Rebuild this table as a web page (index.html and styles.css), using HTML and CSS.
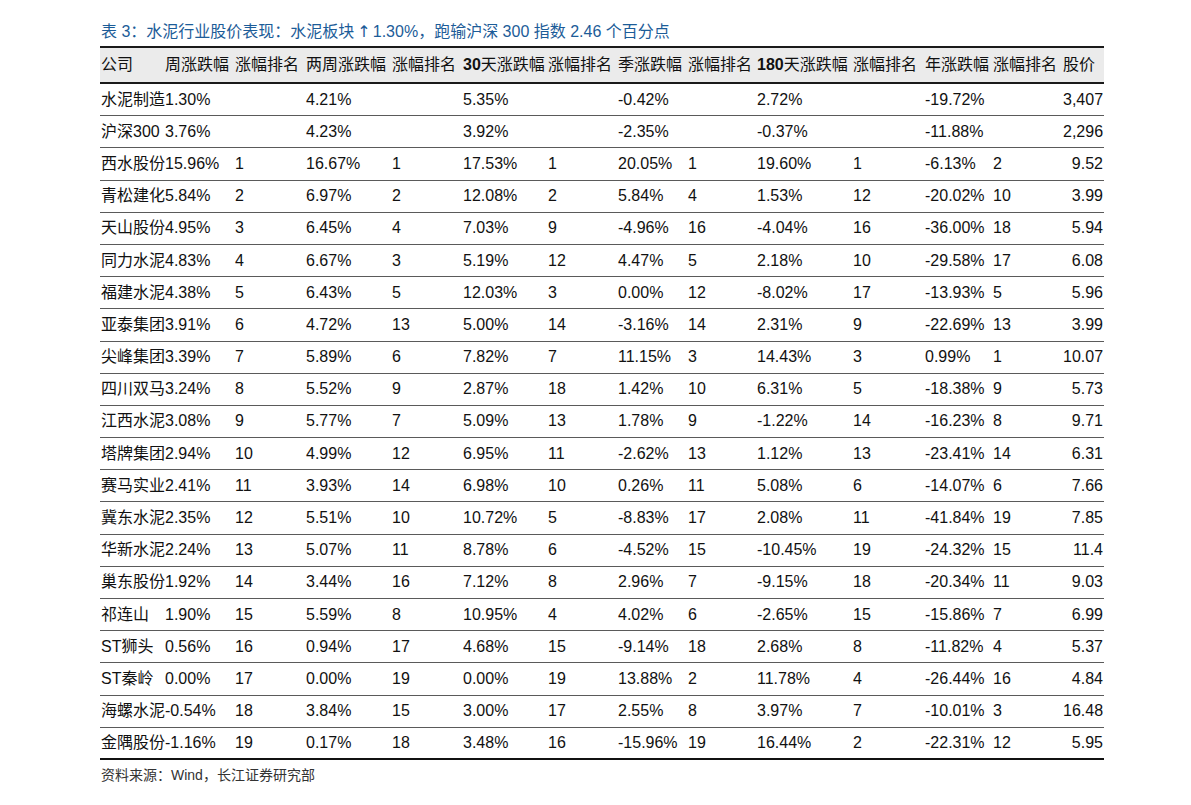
FILE: index.html
```html
<!DOCTYPE html>
<html lang="zh-CN">
<head>
<meta charset="utf-8">
<title>表 3：水泥行业股价表现</title>
<link rel="stylesheet" href="styles.css">
</head>
<body>
<div class="page">
  <h1 class="title">表 3：水泥行业股价表现：水泥板块<span class="arrow">↑</span>1.30%，跑输沪深 300 指数 2.46 个百分点</h1>
  <div class="table">
    <div class="row head">
      <span>公司</span><span>周涨跌幅</span><span>涨幅排名</span><span>两周涨跌幅</span><span>涨幅排名</span><span><b>30</b>天涨跌幅</span><span>涨幅排名</span><span>季涨跌幅</span><span>涨幅排名</span><span><b>180</b>天涨跌幅</span><span>涨幅排名</span><span>年涨跌幅</span><span>涨幅排名</span><span>股价</span>
    </div>
    <div class="row"><span>水泥制造</span><span>1.30%</span><span></span><span>4.21%</span><span></span><span>5.35%</span><span></span><span>-0.42%</span><span></span><span>2.72%</span><span></span><span>-19.72%</span><span></span><span class="num">3,407</span></div>
    <div class="row"><span>沪深300</span><span>3.76%</span><span></span><span>4.23%</span><span></span><span>3.92%</span><span></span><span>-2.35%</span><span></span><span>-0.37%</span><span></span><span>-11.88%</span><span></span><span class="num">2,296</span></div>
    <div class="row"><span>西水股份</span><span>15.96%</span><span>1</span><span>16.67%</span><span>1</span><span>17.53%</span><span>1</span><span>20.05%</span><span>1</span><span>19.60%</span><span>1</span><span>-6.13%</span><span>2</span><span class="num">9.52</span></div>
    <div class="row"><span>青松建化</span><span>5.84%</span><span>2</span><span>6.97%</span><span>2</span><span>12.08%</span><span>2</span><span>5.84%</span><span>4</span><span>1.53%</span><span>12</span><span>-20.02%</span><span>10</span><span class="num">3.99</span></div>
    <div class="row"><span>天山股份</span><span>4.95%</span><span>3</span><span>6.45%</span><span>4</span><span>7.03%</span><span>9</span><span>-4.96%</span><span>16</span><span>-4.04%</span><span>16</span><span>-36.00%</span><span>18</span><span class="num">5.94</span></div>
    <div class="row"><span>同力水泥</span><span>4.83%</span><span>4</span><span>6.67%</span><span>3</span><span>5.19%</span><span>12</span><span>4.47%</span><span>5</span><span>2.18%</span><span>10</span><span>-29.58%</span><span>17</span><span class="num">6.08</span></div>
    <div class="row"><span>福建水泥</span><span>4.38%</span><span>5</span><span>6.43%</span><span>5</span><span>12.03%</span><span>3</span><span>0.00%</span><span>12</span><span>-8.02%</span><span>17</span><span>-13.93%</span><span>5</span><span class="num">5.96</span></div>
    <div class="row"><span>亚泰集团</span><span>3.91%</span><span>6</span><span>4.72%</span><span>13</span><span>5.00%</span><span>14</span><span>-3.16%</span><span>14</span><span>2.31%</span><span>9</span><span>-22.69%</span><span>13</span><span class="num">3.99</span></div>
    <div class="row"><span>尖峰集团</span><span>3.39%</span><span>7</span><span>5.89%</span><span>6</span><span>7.82%</span><span>7</span><span>11.15%</span><span>3</span><span>14.43%</span><span>3</span><span>0.99%</span><span>1</span><span class="num">10.07</span></div>
    <div class="row"><span>四川双马</span><span>3.24%</span><span>8</span><span>5.52%</span><span>9</span><span>2.87%</span><span>18</span><span>1.42%</span><span>10</span><span>6.31%</span><span>5</span><span>-18.38%</span><span>9</span><span class="num">5.73</span></div>
    <div class="row"><span>江西水泥</span><span>3.08%</span><span>9</span><span>5.77%</span><span>7</span><span>5.09%</span><span>13</span><span>1.78%</span><span>9</span><span>-1.22%</span><span>14</span><span>-16.23%</span><span>8</span><span class="num">9.71</span></div>
    <div class="row"><span>塔牌集团</span><span>2.94%</span><span>10</span><span>4.99%</span><span>12</span><span>6.95%</span><span>11</span><span>-2.62%</span><span>13</span><span>1.12%</span><span>13</span><span>-23.41%</span><span>14</span><span class="num">6.31</span></div>
    <div class="row"><span>赛马实业</span><span>2.41%</span><span>11</span><span>3.93%</span><span>14</span><span>6.98%</span><span>10</span><span>0.26%</span><span>11</span><span>5.08%</span><span>6</span><span>-14.07%</span><span>6</span><span class="num">7.66</span></div>
    <div class="row"><span>冀东水泥</span><span>2.35%</span><span>12</span><span>5.51%</span><span>10</span><span>10.72%</span><span>5</span><span>-8.83%</span><span>17</span><span>2.08%</span><span>11</span><span>-41.84%</span><span>19</span><span class="num">7.85</span></div>
    <div class="row"><span>华新水泥</span><span>2.24%</span><span>13</span><span>5.07%</span><span>11</span><span>8.78%</span><span>6</span><span>-4.52%</span><span>15</span><span>-10.45%</span><span>19</span><span>-24.32%</span><span>15</span><span class="num">11.4</span></div>
    <div class="row"><span>巢东股份</span><span>1.92%</span><span>14</span><span>3.44%</span><span>16</span><span>7.12%</span><span>8</span><span>2.96%</span><span>7</span><span>-9.15%</span><span>18</span><span>-20.34%</span><span>11</span><span class="num">9.03</span></div>
    <div class="row"><span>祁连山</span><span>1.90%</span><span>15</span><span>5.59%</span><span>8</span><span>10.95%</span><span>4</span><span>4.02%</span><span>6</span><span>-2.65%</span><span>15</span><span>-15.86%</span><span>7</span><span class="num">6.99</span></div>
    <div class="row"><span>ST狮头</span><span>0.56%</span><span>16</span><span>0.94%</span><span>17</span><span>4.68%</span><span>15</span><span>-9.14%</span><span>18</span><span>2.68%</span><span>8</span><span>-11.82%</span><span>4</span><span class="num">5.37</span></div>
    <div class="row"><span>ST秦岭</span><span>0.00%</span><span>17</span><span>0.00%</span><span>19</span><span>0.00%</span><span>19</span><span>13.88%</span><span>2</span><span>11.78%</span><span>4</span><span>-26.44%</span><span>16</span><span class="num">4.84</span></div>
    <div class="row"><span>海螺水泥</span><span>-0.54%</span><span>18</span><span>3.84%</span><span>15</span><span>3.00%</span><span>17</span><span>2.55%</span><span>8</span><span>3.97%</span><span>7</span><span>-10.01%</span><span>3</span><span class="num">16.48</span></div>
    <div class="row"><span>金隅股份</span><span>-1.16%</span><span>19</span><span>0.17%</span><span>18</span><span>3.48%</span><span>16</span><span>-15.96%</span><span>19</span><span>16.44%</span><span>2</span><span>-22.31%</span><span>12</span><span class="num">5.95</span></div>
  </div>
  <p class="source">资料来源：Wind，长江证券研究部</p>
</div>
</body>
</html>
```
FILE: styles.css
```css
html, body {
  margin: 0;
  padding: 0;
  background: #ffffff;
}

body {
  font-family: "Liberation Sans", "Noto Sans CJK SC", sans-serif;
  color: #111111;
}

.page {
  padding: 22px 0 0 100px;
  width: 1004px;
}

.title {
  margin: 0 0 4px 1px;
  font-size: 16px;
  line-height: 20px;
  font-weight: normal;
  color: #1c5c98;
  white-space: nowrap;
}

.arrow {
  font-family: "DejaVu Sans", sans-serif;
  margin: 0 2px 0 3px;
}

.table {
  display: flex;
  flex-direction: column;
}

.row {
  display: grid;
  grid-template-columns: 64px 70px 71px 86px 71px 85px 70px 70px 69px 96px 72px 68px 70px 1fr;
  align-items: center;
  box-sizing: border-box;
  height: 32.2px;
  border-bottom: 1px solid #5a5a5a;
  padding-left: 1px;
  font-size: 16px;
  line-height: 20px;
  white-space: nowrap;
}

.row span {
  overflow: visible;
}

.row:last-child {
  border-bottom: 2px solid #111111;
}

.head {
  height: 38px;
  background: #ebebeb;
  border-top: 2px solid #1a1a1a;
  border-bottom: 2px solid #1a1a1a;
}

.head b {
  font-weight: bold;
}

.num {
  text-align: right;
  padding-right: 1px;
}

.source {
  margin: 6px 0 0 1px;
  font-size: 14px;
  line-height: 18px;
  color: #333333;
}
```
